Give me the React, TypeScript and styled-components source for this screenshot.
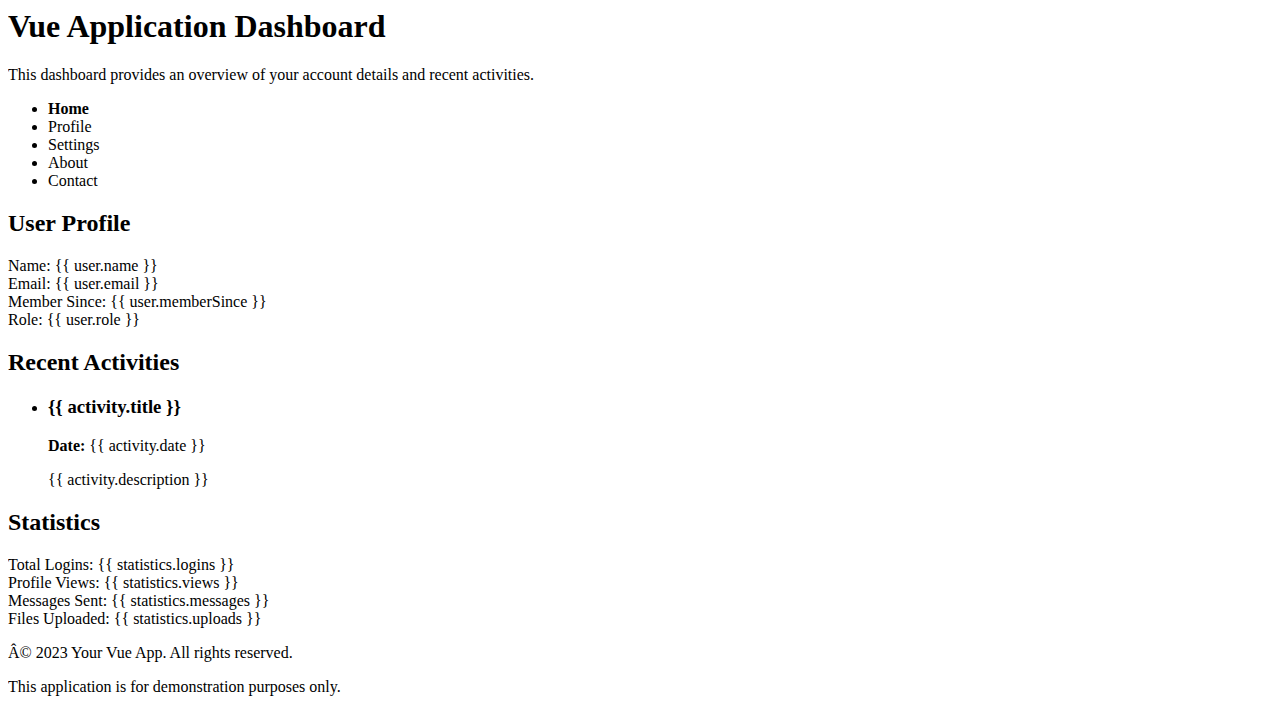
import React from "react";
import styled, { createGlobalStyle } from "styled-components";

const GlobalStyle = createGlobalStyle`
  body {
    margin: 8px;
    font-family: "Liberation Serif", "Times New Roman", serif;
    font-size: 16px;
    color: #000;
    background: #fff;
  }
`;

const Page = styled.div`
  display: flow-root;
`;

const Title = styled.h1`
  font-size: 32px;
  font-weight: bold;
  margin: 0 0 21.44px;
`;

const Paragraph = styled.p`
  margin: 16px 0;
`;

const NavList = styled.ul`
  margin: 16px 0;
  padding-left: 40px;
  list-style: disc;
`;

const NavItem = styled.li<{ $active?: boolean }>`
  font-weight: ${(p) => (p.$active ? "bold" : "normal")};
`;

const SectionTitle = styled.h2`
  font-size: 24px;
  font-weight: bold;
  margin: 19.92px 0;
`;

const InfoLine = styled.div``;

const ActivityList = styled.ul`
  margin: 16px 0;
  padding-left: 40px;
  list-style: disc;
`;

const ActivityTitle = styled.h3`
  font-size: 18.72px;
  font-weight: bold;
  margin: 18.72px 0;
`;

const Label = styled.strong`
  font-weight: bold;
`;

const Footer = styled.footer``;

export default function App() {
  const nav = ["Home", "Profile", "Settings", "About", "Contact"];
  return (
    <Page>
      <GlobalStyle />
      <Title>Vue Application Dashboard</Title>
      <Paragraph>
        This dashboard provides an overview of your account details and recent activities.
      </Paragraph>
      <NavList>
        {nav.map((n, i) => (
          <NavItem key={n} $active={i === 0}>
            {n}
          </NavItem>
        ))}
      </NavList>
      <section>
        <SectionTitle>User Profile</SectionTitle>
        <InfoLine>Name: {"{{ user.name }}"}</InfoLine>
        <InfoLine>Email: {"{{ user.email }}"}</InfoLine>
        <InfoLine>Member Since: {"{{ user.memberSince }}"}</InfoLine>
        <InfoLine>Role: {"{{ user.role }}"}</InfoLine>
      </section>
      <section>
        <SectionTitle>Recent Activities</SectionTitle>
        <ActivityList>
          <li>
            <ActivityTitle>{"{{ activity.title }}"}</ActivityTitle>
            <Paragraph>
              <Label>Date:</Label> {"{{ activity.date }}"}
            </Paragraph>
            <Paragraph>{"{{ activity.description }}"}</Paragraph>
          </li>
        </ActivityList>
      </section>
      <section>
        <SectionTitle>Statistics</SectionTitle>
        <InfoLine>Total Logins: {"{{ statistics.logins }}"}</InfoLine>
        <InfoLine>Profile Views: {"{{ statistics.views }}"}</InfoLine>
        <InfoLine>Messages Sent: {"{{ statistics.messages }}"}</InfoLine>
        <InfoLine>Files Uploaded: {"{{ statistics.uploads }}"}</InfoLine>
      </section>
      <Footer>
        <Paragraph>Â© 2023 Your Vue App. All rights reserved.</Paragraph>
        <Paragraph>This application is for demonstration purposes only.</Paragraph>
      </Footer>
    </Page>
  );
}
